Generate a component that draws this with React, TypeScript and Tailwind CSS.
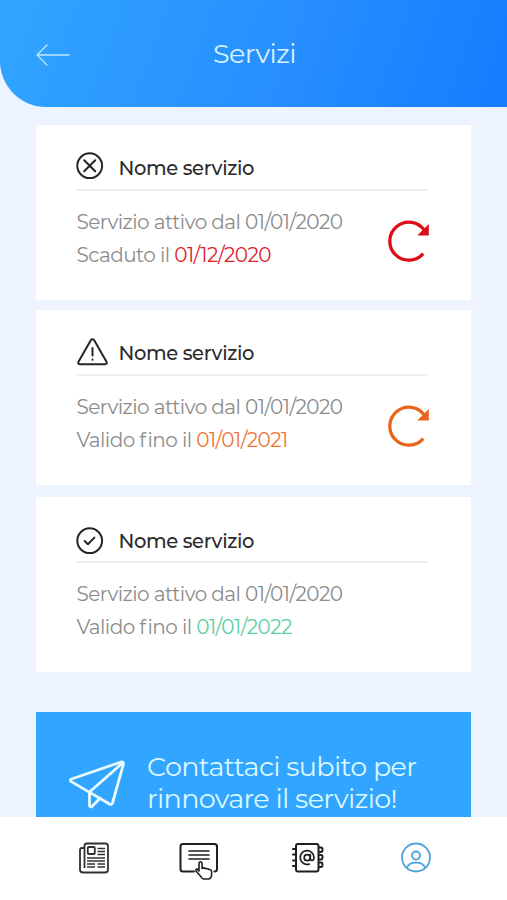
import type { ReactNode } from "react";

function BackArrow() {
  return (
    <svg width="34" height="22" viewBox="0 0 34 22" fill="none" stroke="#bfe8ff" strokeWidth="1.3" strokeLinecap="round" strokeLinejoin="round">
      <path d="M33 11H1M11 1 1 11l10 10" />
    </svg>
  );
}

function ExpiredIcon() {
  return (
    <svg width="28" height="28" viewBox="0 0 28 28" fill="none" stroke="#252525" strokeWidth="2" strokeLinecap="round">
      <circle cx="13.700" cy="13.700" r="12.400" />
      <path d="m8.200 8.200 11 11m0-11-11 11" />
    </svg>
  );
}

function WarningIcon() {
  return (
    <svg width="32" height="28" viewBox="0 0 32 28" fill="none" stroke="#252525" strokeWidth="2" strokeLinecap="round" strokeLinejoin="round">
      <path d="M14.800 2.200 2.500 23.800q-1 2.300 1.400 2.400h25.200q2.400-.1 1.400-2.400L18.200 2.200q-1.700-2-3.400 0Z" />
      <path d="M16.500 10v7.500" />
      <path d="M16.500 21.600v.2" />
    </svg>
  );
}

function ValidIcon() {
  return (
    <svg width="28" height="28" viewBox="0 0 28 28" fill="none" stroke="#252525" strokeWidth="2" strokeLinecap="round" strokeLinejoin="round">
      <circle cx="13.700" cy="13.700" r="12.400" />
      <path d="m8.700 14 3.200 3.200 6.500-6.600" />
    </svg>
  );
}

function RenewIcon() {
  return (
    <svg width="43" height="42" viewBox="0 0 43 42" fill="none" stroke="currentColor" strokeWidth="3.300">
      <path d="M36.200 33.600A19 19 0 1 1 37.500 10.500" />
      <path d="M41.800 4v11.500H30.300Z" fill="currentColor" stroke="none" />
    </svg>
  );
}

function PaperPlane() {
  return (
    <svg width="56" height="50" viewBox="0 0 56 50" fill="none" stroke="#e9fbff" strokeWidth="2.8" strokeLinecap="round" strokeLinejoin="round">
      <path d="M52.200 2 2.500 19q-2.100 1.200-.2 2.600L40.500 44q2.200 1.100 3-1L54.400 4.100Q54.600 1.500 52.200 2Z" />
      <path d="M53.500 3 20.500 32v13.500q.8 2.300 2.700.8l7.800-8" />
    </svg>
  );
}

function NewsIcon() {
  return (
    <svg width="30" height="32" viewBox="0 0 30 32" fill="none" stroke="#303030" strokeWidth="1.8" strokeLinejoin="round">
      <path d="M5.500 6H3Q1 6 1 8v19.500Q1 30.500 4 30.500h22q3 0 3-3V4q0-2.500-2.500-2.500h-19Q5.500 1.500 5.500 4v22" />
      <rect x="8.800" y="5" width="7" height="7" rx="1" />
      <path d="M18.500 6.500H26M18.500 9.500H26M18.500 12.500H26M8 16H26M8 19H26M8 22H16M18.500 22H26M8 25H16M18.500 25H26" strokeWidth="1.6" />
    </svg>
  );
}

function ServicesIcon() {
  return (
    <svg width="40" height="38" viewBox="0 0 40 38" fill="none" stroke="#1f1f1f" strokeWidth="2" strokeLinecap="round" strokeLinejoin="round">
      <path d="M15 29.500H4q-2.500 0-2.500-2.500V4.500Q1.500 2 4 2h31.500Q38 2 38 4.500V27q0 2.500-2.500 2.500" />
      <path d="M10 9h20M10 13h20M10 17h20" strokeWidth="1.6" />
      <path d="M20 29v-7.500q.2-1.700 1.500-1.700t1.600 1.700v5q2-1.400 3.500.3 2-.9 3.200.7 2.800-.2 2.800 2.500v2.500q0 3.800-3 4.500h-5q-1.600-.5-2.600-2.200L17 29q-.5-2 1.300-1.900Z" strokeWidth="1.6" />
    </svg>
  );
}

function ContactsIcon() {
  return (
    <svg width="34" height="32" viewBox="0 0 34 32" fill="none" stroke="#1f1f1f" strokeWidth="2" strokeLinecap="round" strokeLinejoin="round">
      <rect x="5" y="2" width="22.500" height="27.500" rx="2" />
      <path d="M2 7h3M2 12.500h3M2 18.500h3M2 24h3" />
      <path d="M28 5.500h2q1.500 0 1.500 2.200T30 10h-2m0 3h2q1.500 0 1.500 2.300T30 17.500h-2m0 3h2q1.500 0 1.500 2.300T30 25h-2" />
      <circle cx="16.200" cy="15.700" r="3" strokeWidth="1.700" />
      <path d="M19.300 12.500v4q.2 2.100 2 1.900 1.800-.4 1.700-3a6.900 6.900 0 1 0-4.700 6.700" strokeWidth="1.700" />
    </svg>
  );
}

function ProfileIcon() {
  return (
    <svg width="32" height="32" viewBox="0 0 32 32" fill="none" stroke="#4ba3dc" strokeWidth="1.800">
      <circle cx="16" cy="15.500" r="14" />
      <circle cx="16" cy="13.500" r="4" />
      <path d="M7 25.800C9 19 23 19 25 25.800" />
    </svg>
  );
}

function ServiceCard({ icon, iconTop, titleTop, label, date, dateColor, renewColor }: {
  icon: ReactNode; iconTop: string; titleTop: string; label: ReactNode; date: string; dateColor: string; renewColor?: string;
}) {
  return (
    <section className="h-[175px] shrink-0 bg-white pl-[40px] pr-[43px]">
      <div className="flex h-[66px] items-start border-b-2 border-[#efeff0]">
        <div className={`w-[42.500px] shrink-0 ${iconTop}`}>{icon}</div>
        <h2 className={`whitespace-nowrap text-[19.500px] font-medium leading-[26px] tracking-[-0.36px] text-[#2b2b2b] ${titleTop}`}>Nome servizio</h2>
      </div>
      <div className="flex justify-between pt-[15px] text-[20px] leading-[32.500px] text-[#8c8c8c]">
        <div className="whitespace-nowrap pl-[0.500px] tracking-[-0.56px]">
          <p>Servizio attivo dal 01/01/2020</p>
          <p>{label} <span className={dateColor}>{date}</span></p>
        </div>
        {renewColor && <button className={`-mr-[2px] mt-[14px] h-[42px] shrink-0 ${renewColor}`} aria-label="Rinnova"><RenewIcon /></button>}
      </div>
    </section>
  );
}

export default function App() {
  const validUntil = <>Valido <span className="tracking-[1.300px]">f</span>ino il</>;

  return (
    <div className="flex h-[900px] w-[507px] flex-col overflow-hidden bg-[#edf4ff] font-['Montserrat','Inter',sans-serif]">
      <header className="grid h-[107px] shrink-0 grid-cols-[1fr_auto_1fr] items-center rounded-bl-[46px] bg-linear-[110deg,#31a5ff,#278fff_55%,#157cff] pl-[36px] pr-[34px]">
        <button className="mt-[3px] w-[34px]" aria-label="Indietro"><BackArrow /></button>
        <h1 className="text-[27px] leading-8 tracking-[-0.6px] text-[#daf3ff]">Servizi</h1>
      </header>
      <main className="flex min-h-0 flex-1 flex-col px-[36px] pt-[18px]">
        <ServiceCard icon={<ExpiredIcon />} iconTop="mt-[27px]" titleTop="mt-[30px]" label="Scaduto il" date="01/12/2020" dateColor="text-[#dd1e2c]" renewColor="text-[#dc0d17]" />
        <div className="h-[10px] shrink-0" />
        <ServiceCard icon={<WarningIcon />} iconTop="mt-[28px]" titleTop="mt-[30px]" label={validUntil} date="01/01/2021" dateColor="text-[#ef7434]" renewColor="text-[#eb641c]" />
        <div className="h-[12px] shrink-0" />
        <ServiceCard icon={<ValidIcon />} iconTop="mt-[30px]" titleTop="mt-[31px]" label={validUntil} date="01/01/2022" dateColor="text-[#5ccea0]" />
        <aside className="mt-[40px] flex min-h-0 flex-1 items-start overflow-hidden bg-[#31a5ff] pl-[33px] pt-[39px]">
          <div className="mt-[9px] w-[78px] shrink-0"><PaperPlane /></div>
          <div className="whitespace-nowrap text-[27px] leading-[32px] tracking-[-0.64px] text-[#dcf8ff]">
            <p>Contattaci subito per</p>
            <p>rinnovare il servizio!</p>
          </div>
        </aside>
      </main>
      <nav className="grid h-[83px] shrink-0 grid-cols-[100px_112px_109px_32px] items-start bg-white pl-[79px] pt-[25px]">
        <a><NewsIcon /></a><a><ServicesIcon /></a><a><ContactsIcon /></a><a><ProfileIcon /></a>
      </nav>
    </div>
  );
}
